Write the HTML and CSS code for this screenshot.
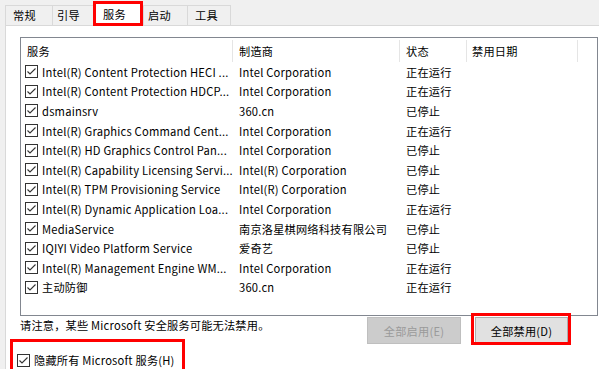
FILE: index.html
```html
<!DOCTYPE html>
<html lang="zh-CN">
<head>
<meta charset="utf-8">
<title>系统配置 - 服务</title>
<link rel="stylesheet" href="styles.css">
</head>
<body>
<div class="dialog">
  <div class="tabs">
    <div class="tab t1">常规</div>
    <div class="tab t2">引导</div>
    <div class="tab sel">服务</div>
    <div class="tab t4">启动</div>
    <div class="tab t5">工具</div>
  </div>
  <div class="page">
    <div class="list">
      <div class="hdr">
        <div class="c-svc">服务</div>
        <div class="c-mfr">制造商</div>
        <div class="c-st">状态</div>
        <div class="c-dt">禁用日期</div>
        <div class="c-rest"></div>
      </div>
      <div class="rows">
        <div class="row"><span class="cb"></span><div class="c-svc">Intel(R) Content Protection HECI ...</div><div class="c-mfr">Intel Corporation</div><div class="c-st">正在运行</div></div>
        <div class="row"><span class="cb"></span><div class="c-svc">Intel(R) Content Protection HDCP...</div><div class="c-mfr">Intel Corporation</div><div class="c-st">正在运行</div></div>
        <div class="row"><span class="cb"></span><div class="c-svc">dsmainsrv</div><div class="c-mfr">360.cn</div><div class="c-st">已停止</div></div>
        <div class="row"><span class="cb"></span><div class="c-svc">Intel(R) Graphics Command Cent...</div><div class="c-mfr">Intel Corporation</div><div class="c-st">正在运行</div></div>
        <div class="row"><span class="cb"></span><div class="c-svc">Intel(R) HD Graphics Control Pan...</div><div class="c-mfr">Intel Corporation</div><div class="c-st">已停止</div></div>
        <div class="row"><span class="cb"></span><div class="c-svc">Intel(R) Capability Licensing Servi...</div><div class="c-mfr">Intel(R) Corporation</div><div class="c-st">已停止</div></div>
        <div class="row"><span class="cb"></span><div class="c-svc">Intel(R) TPM Provisioning Service</div><div class="c-mfr">Intel(R) Corporation</div><div class="c-st">已停止</div></div>
        <div class="row"><span class="cb"></span><div class="c-svc">Intel(R) Dynamic Application Loa...</div><div class="c-mfr">Intel Corporation</div><div class="c-st">正在运行</div></div>
        <div class="row"><span class="cb"></span><div class="c-svc">MediaService</div><div class="c-mfr">南京洛星棋网络科技有限公司</div><div class="c-st">已停止</div></div>
        <div class="row"><span class="cb"></span><div class="c-svc">IQIYI Video Platform Service</div><div class="c-mfr">爱奇艺</div><div class="c-st">已停止</div></div>
        <div class="row"><span class="cb"></span><div class="c-svc">Intel(R) Management Engine WM...</div><div class="c-mfr">Intel Corporation</div><div class="c-st">正在运行</div></div>
        <div class="row"><span class="cb"></span><div class="c-svc">主动防御</div><div class="c-mfr">360.cn</div><div class="c-st">正在运行</div></div>
      </div>
    </div>
    <div class="footer">
      <div class="note">请注意，某些 Microsoft 安全服务可能无法禁用。</div>
      <div class="buttons">
        <button class="btn disabled" disabled>全部启用(E)</button>
        <button class="btn primary mark">全部禁用(D)</button>
      </div>
    </div>
    <div class="hide">
      <span class="cb"></span><span class="hide-label">隐藏所有 Microsoft 服务(H)</span>
    </div>
  </div>
</div>
</body>
</html>
```

FILE: styles.css
```css
html, body {
  margin: 0;
  padding: 0;
}
body {
  width: 599px;
  height: 369px;
  overflow: hidden;
  background: #f0f0f0;
  font-family: "Noto Sans CJK SC", "Noto Sans", sans-serif;
  font-size: 11.2px;
  letter-spacing: 0.2px;
  color: #000;
}
.dialog {
  display: flex;
  flex-direction: column;
  height: 369px;
}
.tabs {
  display: flex;
  align-items: flex-end;
  height: 25px;
  padding-left: 5px;
  flex: none;
}
.tab {
  box-sizing: border-box;
  height: 20px;
  line-height: 19px;
  border: 1px solid #d9d9d9;
  border-bottom: none;
  border-right: none;
  background: #f0f0f0;
  color: #000;
}
.t1 { width: 47px; padding-left: 7px; }
.t2 { width: 41px; padding-left: 4px; }
.t4 { width: 44px; padding-left: 4px; }
.t5 { width: 44px; padding-left: 7px; border-right: 1px solid #d9d9d9; }
.tab.sel {
  position: relative;
  z-index: 1;
  width: 50px;
  height: 25px;
  margin-bottom: -1px;
  padding-left: 7px;
  line-height: 20px;
  background: #fff;
  border: 3px solid #f00;
}
.page {
  flex: 1;
  margin-left: 5px;
  background: #fff;
  border-top: 1px solid #d9d9d9;
  border-left: 1px solid #d9d9d9;
}
.list {
  box-sizing: border-box;
  margin: 11px 0 0 14px;
  width: 578px;
  height: 279px;
  border: 1px solid #828790;
  background: #fff;
}
.hdr {
  display: flex;
  height: 24px;
  align-items: stretch;
}
.hdr > div {
  box-sizing: border-box;
  margin: 2px 0 0;
  line-height: 22px;
  border-right: 1px solid #e5e5e5;
}
.hdr .c-svc { width: 212px; padding-left: 6px; }
.hdr .c-mfr { width: 167px; padding-left: 6px; }
.hdr .c-st { width: 67px; padding-left: 6px; }
.hdr .c-dt { width: 111px; padding-left: 5px; }
.hdr .c-rest { border-right: none; flex: 1; }
.rows {
  display: flex;
  flex-direction: column;
}
.row {
  display: flex;
  align-items: center;
  height: 19.6px;
  white-space: nowrap;
}
.row .cb {
  margin-left: 4px;
  margin-right: 4px;
}
.row > div {
  overflow: hidden;
  box-sizing: border-box;
}
.row .c-svc { width: 191px; }
.row .c-mfr { width: 167px; padding-left: 6px; }
.row .c-st { width: 67px; padding-left: 6px; }
.cb {
  flex: none;
  display: inline-block;
  box-sizing: border-box;
  width: 13px;
  height: 13px;
  border: 1px solid #333;
  background: #fff url("data:image/svg+xml,%3Csvg xmlns='http://www.w3.org/2000/svg' width='11' height='11' viewBox='0 0 11 11'%3E%3Cpath d='M1.5 5.5 L4 8 L9.5 2.5' fill='none' stroke='%23333' stroke-width='1.1'/%3E%3C/svg%3E") no-repeat center;
}
.footer {
  display: flex;
  align-items: flex-start;
  margin: 1px 31px 0 14px;
  height: 27px;
}
.note {
  line-height: 17px;
  white-space: nowrap;
}
.buttons {
  margin-left: auto;
  display: flex;
  gap: 14px;
}
.btn {
  box-sizing: border-box;
  height: 27px;
  font-family: inherit;
  font-size: 11.2px;
  letter-spacing: 0.2px;
  padding: 0;
  margin: 0;
}
.btn.disabled {
  width: 94px;
  background: #cccccc;
  border: 1px solid #bfbfbf;
  color: #9a9a9a;
}
.btn.primary {
  width: 93px;
  background: #e1e1e1;
  border: 1px solid #adadad;
  color: #000;
}
.mark {
  position: relative;
}
.mark::after {
  content: "";
  position: absolute;
  left: -5px;
  right: -4px;
  top: -5px;
  bottom: -2px;
  border: 3px solid #f00;
  pointer-events: none;
}
.hide {
  position: relative;
  display: flex;
  align-items: center;
  margin: 9px 0 0 11px;
  height: 14px;
}
.hide .cb {
  margin-right: 4px;
}
.hide-label {
  white-space: nowrap;
}
.hide::after {
  content: "";
  position: absolute;
  left: -7px;
  top: -14px;
  width: 169px;
  height: 40px;
  border: 3px solid #f00;
}
```
